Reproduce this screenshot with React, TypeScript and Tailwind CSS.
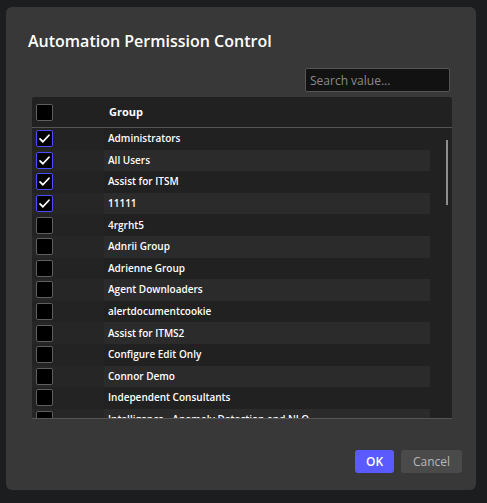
import { useState } from 'react'

const groups = [
  { name: 'Administrators', checked: true },
  { name: 'All Users', checked: true },
  { name: 'Assist for ITSM', checked: true },
  { name: '11111', checked: true },
  { name: '4rgrht5', checked: false },
  { name: 'Adnrii Group', checked: false },
  { name: 'Adrienne Group', checked: false },
  { name: 'Agent Downloaders', checked: false },
  { name: 'alertdocumentcookie', checked: false },
  { name: 'Assist for ITMS2', checked: false },
  { name: 'Configure Edit Only', checked: false },
  { name: 'Connor Demo', checked: false },
  { name: 'Independent Consultants', checked: false },
  { name: 'Intelligence - Anomaly Detection and NLQ', checked: false },
]

function Checkbox({ checked, onClick }: { checked: boolean; onClick?: () => void }) {
  return (
    <button
      onClick={onClick}
      className={`w-[17px] h-[17px] rounded-[2px] bg-black flex items-center justify-center border-[1.5px] ${
        checked ? 'border-[#4b4bff]' : 'border-[#5e5e5e]'
      }`}
    >
      {checked && (
        <svg width="13" height="13" viewBox="0 0 16 16" fill="none">
          <path d="M2.5 8.5l3.5 3.5 7.5-8" stroke="white" strokeWidth="2.2" strokeLinecap="round" strokeLinejoin="round" />
        </svg>
      )}
    </button>
  )
}

export default function App() {
  const [rows, setRows] = useState(groups)

  const toggle = (i: number) => {
    setRows(rows.map((r, idx) => (idx === i ? { ...r, checked: !r.checked } : r)))
  }

  return (
    <div className="w-[487px] h-[503px] bg-[#1c1d1f] pt-[7px] pl-[6px]" style={{ fontFamily: '"Open Sans", "Noto Sans", sans-serif' }}>
      <div className="w-[470px] h-[483px] bg-[#383838] rounded-[6px] flex flex-col">
        {/* Title */}
        <h1 className="text-white font-semibold text-[16px] leading-[22px] pl-[22px] pt-[23px]">
          Automation Permission Control
        </h1>

        {/* Search */}
        <div className="flex justify-end pr-[26px] mt-[16px]">
          <input
            placeholder="Search value..."
            className="w-[145px] h-[24px] bg-[#121212] border border-[#555] rounded-[2px] px-[4px] text-[12px] text-[#ccc] placeholder:text-[#8a8a8a] outline-none"
          />
        </div>

        {/* Table */}
        <div className="ml-[26px] mr-[24px] mt-[5px] bg-[#212121] rounded-t-[2px]">
          <div className="h-[31px] flex items-center border-b border-[#555]">
            <div className="w-[77px] pl-[4px] flex items-center">
              <Checkbox checked={false} />
            </div>
            <div className="text-white font-bold text-[11px]">Group</div>
          </div>

          <div className="relative h-[291px] overflow-hidden border-b border-[#555]">
            <div className="w-[398px]">
              {rows.map((r, i) => (
                <div key={r.name} className={`h-[21.6px] flex items-center ${i % 2 ? 'bg-[#2b2b2b]' : 'bg-[#212121]'}`}>
                  <div className={`w-[72px] h-full pl-[4px] flex items-center ${i % 2 ? 'bg-[#262626]' : 'bg-[#232323]'}`}>
                    <Checkbox checked={r.checked} onClick={() => toggle(i)} />
                  </div>
                  <div className="pl-[4px] text-white font-semibold text-[10px] whitespace-nowrap">{r.name}</div>
                </div>
              ))}
            </div>
            {/* scrollbar */}
            <div className="absolute left-[414px] top-[12px] w-[2px] h-[65px] bg-[#8e8e8e]" />
          </div>
        </div>

        {/* Footer */}
        <div className="flex justify-end gap-[7px] pr-[14px] mt-[31px]">
          <button className="h-[23px] w-[39px] rounded-[3px] bg-[#5a5aff] text-white font-semibold text-[12px]">OK</button>
          <button className="h-[23px] w-[61px] rounded-[3px] bg-[#4a4a4a] text-[#b8b8b8] text-[12px]">Cancel</button>
        </div>
      </div>
    </div>
  )
}
